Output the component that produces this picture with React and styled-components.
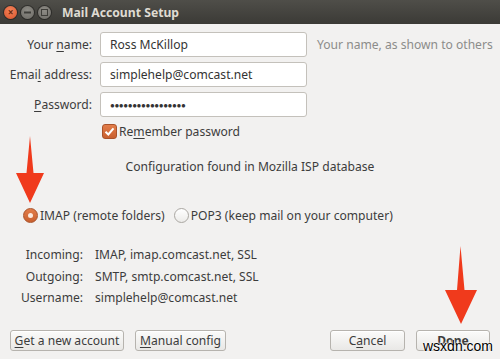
import React from "react";
import styled, { createGlobalStyle } from "styled-components";

const Global = createGlobalStyle`
  html, body { margin: 0; padding: 0; background: #f2f1f0; }
  body { font-family: "Noto Sans", "Open Sans", sans-serif; }
`;

const Window = styled.div`
  position: relative;
  width: 500px;
  height: 359px;
  background: #f2f1f0;
  display: flex;
  flex-direction: column;
  overflow: hidden;
  color: #3c3c3c;
  font-size: 12.1px;
`;

const TitleBar = styled.div`
  height: 24px;
  flex: none;
  background: linear-gradient(#4f4e49, #3b3a36);
  display: flex;
  align-items: center;
  padding-left: 4px;
  gap: 4px;
`;

const Ctl = styled.div`
  width: 13px;
  height: 13px;
  border-radius: 50%;
  background: ${(p) => (p.$close ? "radial-gradient(circle at 50% 35%, #f3845c, #d9532a)" : "radial-gradient(circle at 50% 35%, #8e8c86, #6c6a65)")};
  box-shadow: 0 0 0 1px rgba(0,0,0,0.35);
  display: flex;
  align-items: center;
  justify-content: center;
  color: ${(p) => (p.$close ? "#6b2a10" : "#4b4a46")};
  font-size: 10px;
  line-height: 1;
  font-weight: bold;
`;

const Title = styled.div`
  margin-left: 7px;
  color: #dfdbd2;
  font-weight: bold;
  font-size: 12.2px;
`;

const Body = styled.div`
  flex: 1;
  display: flex;
  flex-direction: column;
  padding-top: 8px;
`;

const FormGrid = styled.div`
  display: grid;
  grid-template-columns: 92px 207px 1fr;
  column-gap: 8px;
  row-gap: 5px;
  align-items: center;
`;

const Label = styled.label`
  text-align: right;
  white-space: nowrap;
`;

const Input = styled.div`
  height: 25px;
  box-sizing: border-box;
  border: 1px solid #c4c1bb;
  border-radius: 3px;
  background: #fff;
  display: flex;
  align-items: center;
  padding-left: 9px;
  color: #333;
  white-space: nowrap;
  overflow: hidden;
`;

const Dots = styled.span`
  font-size: 8px;
  letter-spacing: -0.4px;
  color: #333;
`;

const Hint = styled.div`
  color: #8c8c8a;
  padding-left: 2px;
  white-space: nowrap;
`;

const U = styled.u`
  text-decoration-thickness: 1px;
  text-underline-offset: 2px;
`;

const CheckRow = styled.div`
  grid-column: 2 / 4;
  display: flex;
  align-items: center;
  gap: 2px;
  margin-top: 1px;
  padding-left: 2px;
`;

const CheckBox = styled.span`
  width: 15px;
  height: 15px;
  box-sizing: border-box;
  border-radius: 3px;
  background: linear-gradient(#e27d4a, #c9602f);
  border: 1px solid #a9522a;
  display: inline-flex;
  align-items: center;
  justify-content: center;
`;

const ConfigText = styled.div`
  text-align: center;
  margin-top: 18px;
`;

const RadioRow = styled.div`
  display: flex;
  align-items: center;
  margin-top: 32px;
  padding-left: 23px;
`;

const RadioOpt = styled.div`
  display: flex;
  align-items: center;
  gap: 2px;
  margin-right: 9px;
`;

const Radio = styled.span`
  width: 15px;
  height: 15px;
  box-sizing: border-box;
  border-radius: 50%;
  display: inline-flex;
  align-items: center;
  justify-content: center;
  border: 1px solid ${(p) => (p.$on ? "#a9522a" : "#aaa7a2")};
  background: ${(p) => (p.$on ? "linear-gradient(#e27d4a, #c9602f)" : "linear-gradient(#ffffff, #ecebe9)")};
  &::after {
    content: "";
    display: ${(p) => (p.$on ? "block" : "none")};
    width: 5px;
    height: 5px;
    border-radius: 50%;
    background: #fbe9de;
  }
`;

const InfoGrid = styled.div`
  display: grid;
  grid-template-columns: 83px auto;
  column-gap: 12px;
  row-gap: 4.5px;
  margin-top: 22px;
  line-height: 17px;
`;

const InfoLabel = styled.div`
  text-align: right;
`;

const ButtonRow = styled.div`
  margin-top: auto;
  margin-bottom: 8px;
  display: flex;
  padding: 0 10px;
  gap: 11px;
`;

const Spacer = styled.div`
  flex: 1;
`;

const Button = styled.button`
  height: 21px;
  box-sizing: border-box;
  width: ${(p) => p.$w}px;
  padding: 0;
  border: 1px solid #b6b3ae;
  border-radius: 3px;
  background: linear-gradient(#fbfbfa, #e9e8e6);
  box-shadow: inset 0 1px 0 #fff;
  font-family: inherit;
  font-size: 12.1px;
  color: #3c3c3c;
  font-weight: ${(p) => (p.$bold ? "bold" : "normal")};
`;

const Arrow = styled.svg`
  position: absolute;
  left: ${(p) => p.$x}px;
  top: ${(p) => p.$y}px;
`;

const Watermark = styled.div`
  position: absolute;
  left: 423px;
  top: 338px;
  font-size: 14px;
  color: #000;
  text-shadow: 0 0 2px #fff, 0 0 2px #fff, 0 0 2px #fff;
  font-family: "Liberation Sans", sans-serif;
`;

export default function App() {
  return (
    <>
      <Global />
      <Window>
        <TitleBar>
          <Ctl $close>×</Ctl>
          <Ctl>
            <svg width="7" height="7"><rect x="0" y="2.5" width="7" height="2" fill="#3f3e3a" /></svg>
          </Ctl>
          <Ctl>
            <svg width="7" height="7"><rect x="0.5" y="0.5" width="6" height="6" fill="none" stroke="#3f3e3a" /></svg>
          </Ctl>
          <Title>Mail Account Setup</Title>
        </TitleBar>
        <Body>
          <FormGrid>
            <Label>Your <U>n</U>ame:</Label>
            <Input>Ross McKillop</Input>
            <Hint>Your name, as shown to others</Hint>
            <Label>Emai<U>l</U> address:</Label>
            <Input>simplehelp@comcast.net</Input>
            <div />
            <Label><U>P</U>assword:</Label>
            <Input><Dots>●●●●●●●●●●●●●●●●●</Dots></Input>
            <div />
            <div />
            <CheckRow>
              <CheckBox>
                <svg width="11" height="11" viewBox="0 0 11 11">
                  <path d="M1.5 5.8 L4.3 8.5 L9.5 2.3" fill="none" stroke="#fff" strokeWidth="2" />
                </svg>
              </CheckBox>
              <span>Re<U>m</U>ember password</span>
            </CheckRow>
          </FormGrid>
          <ConfigText>Configuration found in Mozilla ISP database</ConfigText>
          <RadioRow>
            <RadioOpt>
              <Radio $on />
              <span>IMAP (remote folders)</span>
            </RadioOpt>
            <RadioOpt>
              <Radio />
              <span>POP3 (keep mail on your computer)</span>
            </RadioOpt>
          </RadioRow>
          <InfoGrid>
            <InfoLabel>Incoming:</InfoLabel>
            <div>IMAP, imap.comcast.net, SSL</div>
            <InfoLabel>Outgoing:</InfoLabel>
            <div>SMTP, smtp.comcast.net, SSL</div>
            <InfoLabel>Username:</InfoLabel>
            <div>simplehelp@comcast.net</div>
          </InfoGrid>
          <ButtonRow>
            <Button $w={114}><U>G</U>et a new account</Button>
            <Button $w={91}><U>M</U>anual config</Button>
            <Spacer />
            <Button $w={75}>C<U>a</U>ncel</Button>
            <Button $w={74} $bold>Done</Button>
          </ButtonRow>
        </Body>
        <Arrow $x={15} $y={136} width="30" height="68" viewBox="0 0 30 68">
          <path d="M15 0 L18.5 37 L29 37 L15 67 L1 37 L11.5 37 Z" fill="#f03a1c" />
        </Arrow>
        <Arrow $x={444} $y={246} width="34" height="80" viewBox="0 0 34 80">
          <path d="M16.5 0 L20.5 44 L33 44 L17 78 L1 44 L13 44 Z" fill="#f03a1c" />
        </Arrow>
        <Watermark>wsxdn.com</Watermark>
      </Window>
    </>
  );
}
